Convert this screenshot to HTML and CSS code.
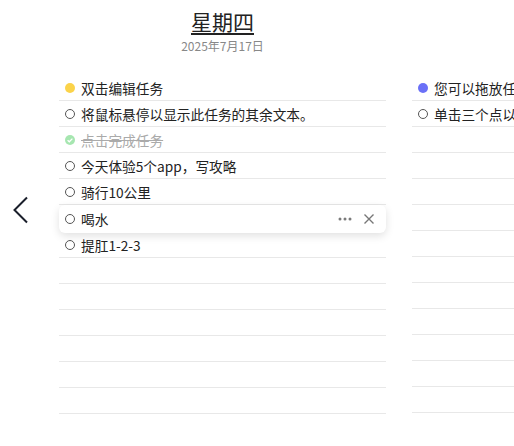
FILE: index.html
```html
<!DOCTYPE html>
<html lang="zh-CN">
<head>
<meta charset="UTF-8" />
<meta name="viewport" content="width=device-width, initial-scale=1" />
<title>周计划</title>
<link rel="stylesheet" href="styles.css">
</head>
<body>
<div class="week">
    <!-- previous-day arrow -->
    <div class="nav">
        <button class="prev" aria-label="上一天">
            <svg width="17" height="28" viewBox="0 0 17 28"><path d="M15 1.5 L2.5 14 L15 26.5" fill="none" stroke="#1a1f2b" stroke-width="2"/></svg>
        </button>
    </div>

    <div class="day">
        <div class="day-head">
            <div class="day-name">星期四</div>
            <div class="day-date">2025年7月17日</div>
        </div>
        <ul class="tasks">
            <li class="task"><span class="dot yellow"></span><span class="label">双击编辑任务</span></li>
            <li class="task"><span class="box"></span><span class="label">将鼠标悬停以显示此任务的其余文本。</span></li>
            <li class="task done"><span class="check"><svg width="10" height="10" viewBox="0 0 10 10"><path d="M2.6 5.2 L4.3 6.8 L7.4 3.6" fill="none" stroke="#fff" stroke-width="1.3"/></svg></span><span class="label">点击完成任务</span></li>
            <li class="task"><span class="box"></span><span class="label">今天体验5个app，写攻略</span></li>
            <li class="task"><span class="box"></span><span class="label">骑行10公里</span></li>
            <li class="task hover"><span class="box"></span><span class="label">喝水</span>
                <span class="actions">
                    <svg class="more" width="14" height="4" viewBox="0 0 14 4"><circle cx="2" cy="2" r="1.5" fill="#7a7a7a"/><circle cx="7" cy="2" r="1.5" fill="#7a7a7a"/><circle cx="12" cy="2" r="1.5" fill="#7a7a7a"/></svg>
                    <svg class="close" width="12" height="12" viewBox="0 0 12 12"><path d="M1.5 1.5 L10.5 10.5 M10.5 1.5 L1.5 10.5" stroke="#777" stroke-width="1.4"/></svg>
                </span>
            </li>
            <li class="task"><span class="box"></span><span class="label">提肛1-2-3</span></li>
            <li class="task"></li>
            <li class="task"></li>
            <li class="task"></li>
            <li class="task"></li>
            <li class="task"></li>
            <li class="task"></li>
        </ul>
    </div>

    <div class="day">
        <div class="day-head">
            <div class="day-name">星期五</div>
            <div class="day-date">2025年7月18日</div>
        </div>
        <ul class="tasks">
            <li class="task"><span class="dot blue"></span><span class="label">您可以拖放任务</span></li>
            <li class="task"><span class="box"></span><span class="label">单击三个点以查看更多</span></li>
            <li class="task"></li>
            <li class="task"></li>
            <li class="task"></li>
            <li class="task"></li>
            <li class="task"></li>
            <li class="task"></li>
            <li class="task"></li>
            <li class="task"></li>
            <li class="task"></li>
            <li class="task"></li>
            <li class="task"></li>
        </ul>
    </div>
</div>
</body>
</html>
```

FILE: styles.css
```css
body {
margin: 0;
font-family: "Noto Sans CJK SC", "Noto Sans", sans-serif;
color: #222;
background: #fff;
overflow: hidden;
}
.week {
display: flex;
gap: 26px;
width: 900px;
}
.nav {
width: 59px;
margin-right: -26px;
padding-top: 196px;
}
.prev {
border: none;
background: none;
padding: 0 0 0 12px;
cursor: pointer;
}
.day {
width: 327px;
flex-shrink: 0;
}
.day-head {
text-align: center;
height: 75px;
}
.day-name {
display: inline-block;
font-size: 21px;
line-height: 28px;
margin-top: 7px;
text-decoration: underline;
text-underline-offset: 3px;
text-decoration-thickness: 2px;
}
.day-date {
font-size: 12px;
line-height: 16px;
margin-top: 3px;
color: #888;
}
.tasks {
list-style: none;
margin: 0;
padding: 0;
}
.task {
display: flex;
align-items: center;
gap: 6px;
height: 25px;
padding-left: 6px;
border-bottom: 1px solid #e8e8e8;
font-size: 13.7px;
white-space: nowrap;
}
.box, .dot, .check {
width: 10px;
height: 10px;
border-radius: 50%;
flex-shrink: 0;
box-sizing: border-box;
}
.box {
border: 1px solid #555;
}
.dot.yellow {
background: #fbd34a;
}
.dot.blue {
background: #6a70f7;
}
.check {
background: #a6e6b0;
display: flex;
}
.done .label {
color: #aaa;
text-decoration: line-through;
}
.task.hover {
position: relative;
z-index: 1;
height: 27px;
margin-bottom: -1px;
border-bottom-color: transparent;
border-radius: 6px;
background: #fff;
box-shadow: 0 3px 8px rgba(0,0,0,0.12);
}
.actions {
margin-left: auto;
display: flex;
align-items: center;
gap: 11px;
padding-right: 11px;
}
```
